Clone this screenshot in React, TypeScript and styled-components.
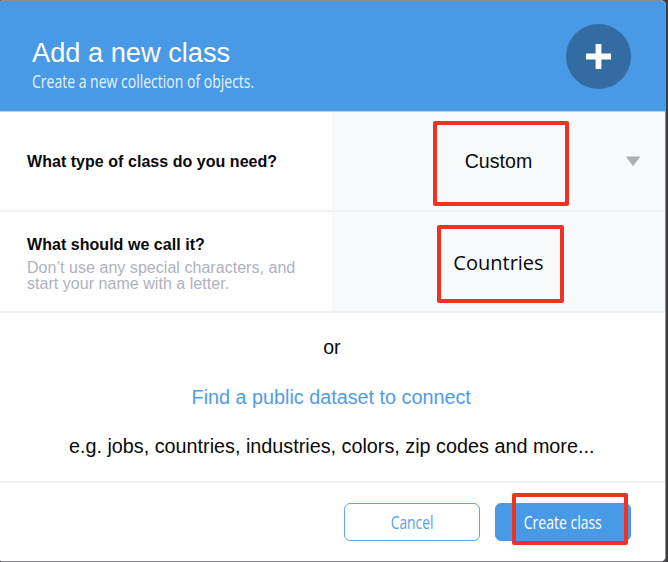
import React from "react";
import styled, { createGlobalStyle } from "styled-components";

const GlobalStyle = createGlobalStyle`
  * { box-sizing: border-box; }
  body { margin: 0; background: #3f3d3f; font-family: "Liberation Sans", Arial, sans-serif; color: #0a0a0a; }
`;

const Dialog = styled.main`
  width: 666px;
  height: 562px;
  display: flex;
  flex-direction: column;
  overflow: hidden;
  background: #fff;
  border: solid #8f8f92;
  border-width: 1px 1px 1px 0;
  border-radius: 2px 5px 5px 2px;
`;

const Header = styled.header`
  height: 111px;
  flex: none;
  display: flex;
  justify-content: space-between;
  background: #4899e6;
  border-bottom: 1px solid #b4d6f6;
  padding: 23px 34px 0 32px;
  color: #fff;
`;

const Heading = styled.div`
  padding-top: 14px;
`;

const Fitted = styled.span<{ $scale?: number; $origin?: string }>`
  display: inline-block;
  white-space: nowrap;
  transform: scaleX(${(p) => p.$scale ?? 1});
  transform-origin: ${(p) => p.$origin ?? "left"} center;
`;

const Title = styled.h1`
  margin: 0;
  font-size: 27px;
  line-height: 31px;
  font-weight: 400;
`;

const Subtitle = styled.p`
  margin: 1px 0 0;
  font: 400 18.5px/22px "Open Sans", sans-serif;
  color: #e9f3fd;
  width: 230px;
`;

const PlusBadge = styled.div`
  width: 65px;
  height: 65px;
  border-radius: 50%;
  background: #326ca2;
  display: grid;
  place-items: center;
`;

const Row = styled.section<{ $height: number; $line: number }>`
  height: ${(p) => p.$height}px;
  flex: none;
  display: grid;
  grid-template-columns: 332px 1fr;
  border-bottom: ${(p) => p.$line}px solid #f1f2f2;
`;

const Label = styled.div`
  padding: 2px 0 0 27px;
  display: flex;
  flex-direction: column;
  justify-content: center;
`;

const Question = styled.h2`
  margin: 0;
  font-size: 16px;
  line-height: 18px;
  font-weight: 700;
  letter-spacing: 0.04px;
`;

const Hint = styled.p`
  margin: 6px 0 -3px;
  font-size: 16px;
  line-height: 16px;
  letter-spacing: 0.04px;
  color: #b0b0bf;
  white-space: nowrap;
`;

const Field = styled.div`
  position: relative;
  background: #f6fafb;
  display: flex;
  justify-content: center;
  align-items: center;
  font-size: 20px;
`;

const Countries = styled.span`
  font: 400 20px/28px "Open Sans", sans-serif;
  padding-top: 2px;
`;

const Arrow = styled.svg`
  position: absolute;
  left: 293px;
  top: 44px;
`;

const Highlight = styled.div<{ $x: number; $y: number; $w: number; $h: number }>`
  position: absolute;
  left: ${(p) => p.$x}px;
  top: ${(p) => p.$y}px;
  width: ${(p) => p.$w}px;
  height: ${(p) => p.$h}px;
  border: 4px solid #ee3224;
  border-radius: 2px;
  pointer-events: none;
`;

const Alternative = styled.section`
  height: 170px;
  flex: none;
  border-bottom: 2px solid #f1f1f1;
  display: flex;
  flex-direction: column;
  align-items: center;
  padding: 23px 2px 0 0;
  gap: 27px;
  font-size: 20px;
  line-height: 22.6px;
`;

const Link = styled.a`
  color: #4f9ce8;
`;

const Footer = styled.footer`
  flex: 1;
  display: flex;
  justify-content: flex-end;
  align-items: flex-start;
  gap: 15px;
  padding: 20px 34px 0 0;
`;

const Button = styled.button<{ $primary?: boolean }>`
  position: relative;
  width: 136px;
  height: 38px;
  padding: 0;
  border: 1px solid ${(p) => (p.$primary ? "#4899e6" : "#5fa8ec")};
  border-radius: 6px;
  background: ${(p) => (p.$primary ? "#4899e6" : "#fff")};
  color: ${(p) => (p.$primary ? "#fff" : "#5b9fe8")};
  font: 400 17.5px/22px "Open Sans", sans-serif;
`;

export default function App() {
  return (
    <>
      <GlobalStyle />
      <Dialog>
        <Header>
          <Heading>
            <Title><Fitted $scale={1.008}>Add a new class</Fitted></Title>
            <Subtitle><Fitted $scale={0.757}>Create a new collection of objects.</Fitted></Subtitle>
          </Heading>
          <PlusBadge>
            <svg width="25" height="25" viewBox="0 0 25 25">
              <path d="M9.6 0h5.8v9.6H25v5.8h-9.6V25H9.6v-9.6H0V9.6h9.6z" fill="#fff" />
            </svg>
          </PlusBadge>
        </Header>
        <Row $height={100} $line={2}>
          <Label><Question>What type of class do you need?</Question></Label>
          <Field>
            <Fitted $scale={0.98} $origin="center">Custom</Fitted>
            <Arrow width="16" height="11" viewBox="0 0 16 11"><path d="M.8.5h14.6L8.1 10.3z" fill="#aeb0b0" /></Arrow>
            <Highlight $x={101} $y={9} $w={136} $h={85} />
          </Field>
        </Row>
        <Row $height={101} $line={2}>
          <Label>
            <Question>What should we call it?</Question>
            <Hint>Don’t use any special characters, and<br />start your name with a letter.</Hint>
          </Label>
          <Field>
            <Countries>Countries</Countries>
            <Highlight $x={105} $y={13} $w={127} $h={78} />
          </Field>
        </Row>
        <Alternative>
          <Fitted $scale={0.98} $origin="center">or</Fitted>
          <Link><Fitted $scale={0.989} $origin="center">Find a public dataset to connect</Fitted></Link>
          <Fitted $scale={0.989} $origin="center">e.g. jobs, countries, industries, colors, zip codes and more...</Fitted>
        </Alternative>
        <Footer>
          <Button><Fitted $scale={0.79} $origin="center">Cancel</Fitted></Button>
          <Button $primary>
            <Fitted $scale={0.8} $origin="center">Create class</Fitted>
            <Highlight $x={16} $y={-11} $w={116} $h={52} />
          </Button>
        </Footer>
      </Dialog>
    </>
  );
}
